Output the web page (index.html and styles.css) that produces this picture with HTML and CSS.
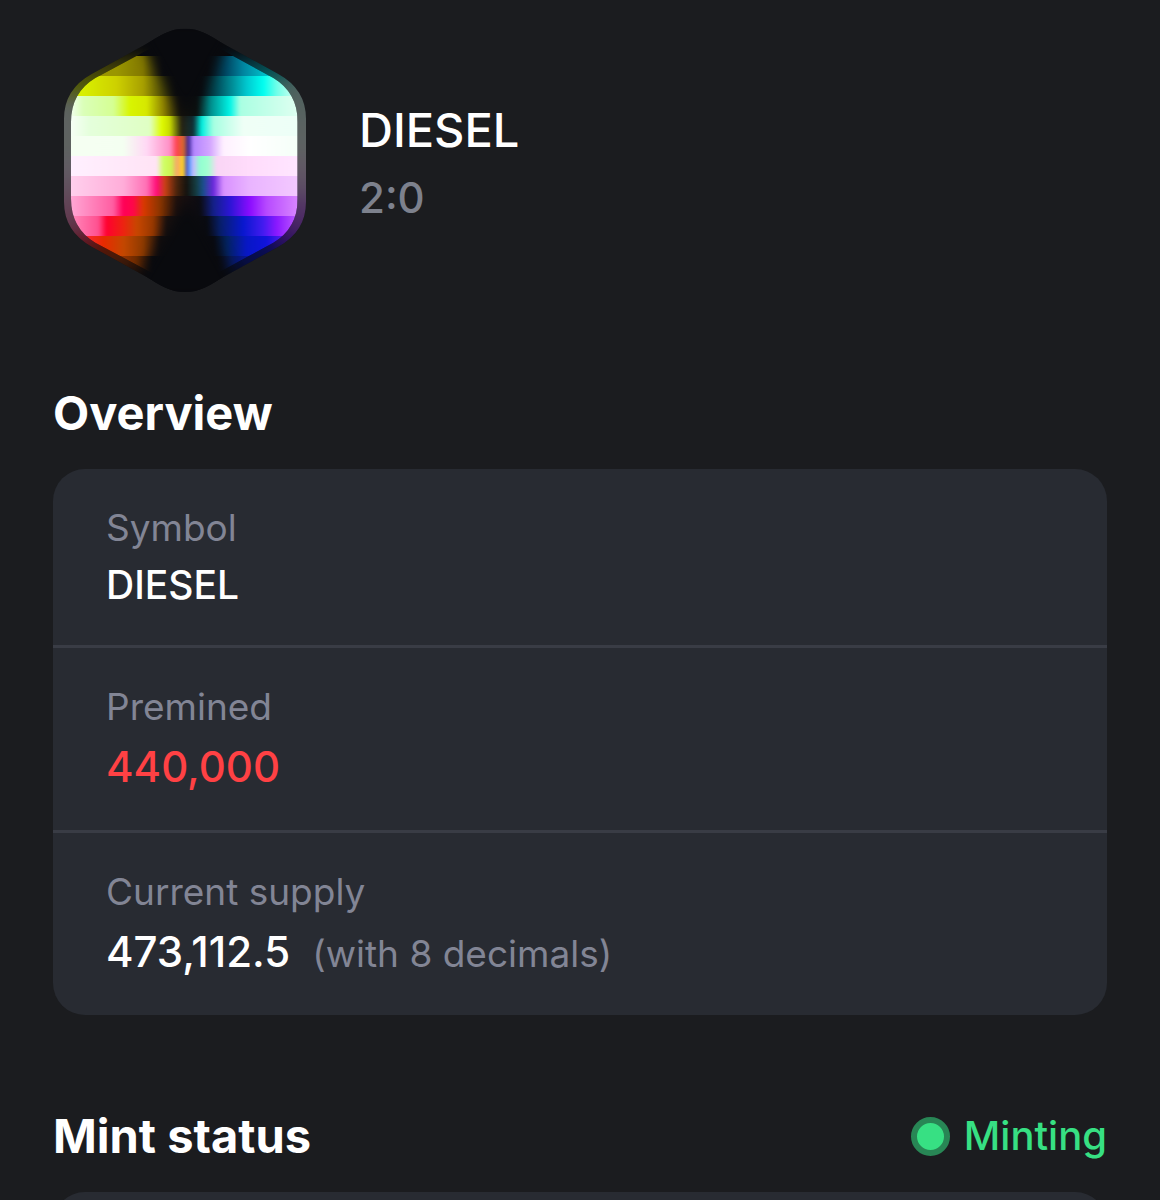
FILE: index.html
```html
<!DOCTYPE html>
<html lang="en">
<head>
<meta charset="utf-8">
<meta name="viewport" content="width=device-width, initial-scale=1">
<title>DIESEL</title>
<link rel="stylesheet" href="styles.css">
</head>
<body>
<main class="page">
  <header class="token">
    <svg class="token-logo" viewBox="42 24 726 792" role="img" aria-label="DIESEL logo">
      <defs>
        <clipPath id="outer"><path d="M285 74C335 44 360 26 405 26S475 44 525 74L685 162Q768 208 768 296V546Q768 634 685 680L525 768C475 798 450 816 405 816S335 798 285 768L125 680Q42 634 42 546V296Q42 208 125 162Z"/></clipPath>
        <clipPath id="inner"><path d="M345 62Q405 28 465 62L670 174Q743 218 743 306V536Q743 624 670 668L465 780Q405 814 345 780L136 668Q63 624 63 536V306Q63 218 136 174Z"/></clipPath>
        <filter id="glow" x="-10%" y="-10%" width="120%" height="120%" color-interpolation-filters="sRGB"><feGaussianBlur stdDeviation="14 24"/></filter>
        <filter id="soft" x="-2%" y="-2%" width="104%" height="104%" color-interpolation-filters="sRGB"><feGaussianBlur stdDeviation="5 1"/></filter>
        <filter id="shade" x="-30%" y="-30%" width="160%" height="160%" color-interpolation-filters="sRGB"><feGaussianBlur stdDeviation="20"/></filter>
        <linearGradient id="b1" gradientUnits="userSpaceOnUse" x1="0" x2="1000"><stop offset=".2" stop-color="#9a9600"/><stop offset=".28" stop-color="#817700"/><stop offset=".34" stop-color="#0b0b0f"/><stop offset=".47" stop-color="#090a0e"/><stop offset=".53" stop-color="#004a66"/><stop offset=".58" stop-color="#0085a0"/><stop offset=".65" stop-color="#00c4cc"/></linearGradient>
        <linearGradient id="b2" gradientUnits="userSpaceOnUse" x1="0" x2="1000"><stop offset=".1" stop-color="#d8ef00"/><stop offset=".2" stop-color="#cdd000"/><stop offset=".28" stop-color="#a79f00"/><stop offset=".38" stop-color="#0e0e0b"/><stop offset=".45" stop-color="#080b0f"/><stop offset=".51" stop-color="#005b68"/><stop offset=".59" stop-color="#00c8cf"/><stop offset=".64" stop-color="#00fff0"/><stop offset=".68" stop-color="#6fffe8"/><stop offset=".73" stop-color="#c8fff0"/></linearGradient>
        <linearGradient id="b3" gradientUnits="userSpaceOnUse" x1="0" x2="1000"><stop offset=".06" stop-color="#f2fff0"/><stop offset=".1" stop-color="#daffb8"/><stop offset=".19" stop-color="#d5ff93"/><stop offset=".24" stop-color="#d8f500"/><stop offset=".29" stop-color="#d6e800"/><stop offset=".34" stop-color="#8f8300"/><stop offset=".39" stop-color="#17140b"/><stop offset=".44" stop-color="#0b1110"/><stop offset=".48" stop-color="#008a89"/><stop offset=".54" stop-color="#00f4e6"/><stop offset=".57" stop-color="#a9ffe2"/><stop offset=".74" stop-color="#ddfff0"/></linearGradient>
        <linearGradient id="b4" gradientUnits="userSpaceOnUse" x1="0" x2="1000"><stop offset=".06" stop-color="#f7fff7"/><stop offset=".12" stop-color="#e4ffdb"/><stop offset=".3" stop-color="#dfffc3"/><stop offset=".335" stop-color="#dffb00"/><stop offset=".36" stop-color="#c7d900"/><stop offset=".395" stop-color="#272313"/><stop offset=".43" stop-color="#0f3038"/><stop offset=".455" stop-color="#00eee0"/><stop offset=".49" stop-color="#a5ffe1"/><stop offset=".58" stop-color="#effff6"/><stop offset=".74" stop-color="#edfff7"/></linearGradient>
        <linearGradient id="b5" gradientUnits="userSpaceOnUse" x1="0" x2="1000"><stop offset=".06" stop-color="#f5fff2"/><stop offset=".22" stop-color="#f4fff1"/><stop offset=".29" stop-color="#ffd8f5"/><stop offset=".36" stop-color="#ff8fc6"/><stop offset=".38" stop-color="#ff4350"/><stop offset=".4" stop-color="#d96a27"/><stop offset=".415" stop-color="#3b2599"/><stop offset=".43" stop-color="#b385ff"/><stop offset=".48" stop-color="#d3a5ff"/><stop offset=".52" stop-color="#fff0ff"/><stop offset=".6" stop-color="#fff"/><stop offset=".74" stop-color="#f5fff8"/></linearGradient>
        <linearGradient id="b6" gradientUnits="userSpaceOnUse" x1="0" x2="1000"><stop offset=".06" stop-color="#fff0ff"/><stop offset=".32" stop-color="#ffe3f5"/><stop offset=".34" stop-color="#cfff67"/><stop offset=".365" stop-color="#cdf34f"/><stop offset=".38" stop-color="#f5a76c"/><stop offset=".4" stop-color="#ffd21c"/><stop offset=".41" stop-color="#4a51c9"/><stop offset=".42" stop-color="#63a8ff"/><stop offset=".43" stop-color="#c9b8ff"/><stop offset=".45" stop-color="#91ffd0"/><stop offset=".475" stop-color="#a5ffd2"/><stop offset=".5" stop-color="#f9d5f5"/><stop offset=".6" stop-color="#ffdcfb"/><stop offset=".74" stop-color="#ffe5ff"/></linearGradient>
        <linearGradient id="b7" gradientUnits="userSpaceOnUse" x1="0" x2="1000"><stop offset=".06" stop-color="#ffd0ed"/><stop offset=".22" stop-color="#ffadd9"/><stop offset=".29" stop-color="#ff70b5"/><stop offset=".32" stop-color="#ff0d78"/><stop offset=".345" stop-color="#c94113"/><stop offset=".38" stop-color="#4c250d"/><stop offset=".41" stop-color="#15130f"/><stop offset=".44" stop-color="#154046"/><stop offset=".46" stop-color="#1a4f8d"/><stop offset=".49" stop-color="#6a27dc"/><stop offset=".52" stop-color="#d890ff"/><stop offset=".6" stop-color="#e9b4ff"/><stop offset=".74" stop-color="#f3c8ff"/></linearGradient>
        <linearGradient id="b8" gradientUnits="userSpaceOnUse" x1="0" x2="1000"><stop offset=".06" stop-color="#ffa8d6"/><stop offset=".19" stop-color="#ff5da1"/><stop offset=".22" stop-color="#ff0057"/><stop offset=".25" stop-color="#ff0749"/><stop offset=".28" stop-color="#d93900"/><stop offset=".33" stop-color="#8a3500"/><stop offset=".38" stop-color="#20110d"/><stop offset=".45" stop-color="#0c0c14"/><stop offset=".49" stop-color="#132087"/><stop offset=".54" stop-color="#2b15d5"/><stop offset=".6" stop-color="#8b0cff"/><stop offset=".65" stop-color="#b74aff"/><stop offset=".74" stop-color="#d783ff"/></linearGradient>
        <linearGradient id="b9" gradientUnits="userSpaceOnUse" x1="0" x2="1000"><stop offset=".06" stop-color="#ff8abe"/><stop offset=".145" stop-color="#ff5090"/><stop offset=".17" stop-color="#ff0030"/><stop offset=".22" stop-color="#ed2310"/><stop offset=".26" stop-color="#c84600"/><stop offset=".31" stop-color="#963800"/><stop offset=".35" stop-color="#1b110e"/><stop offset=".47" stop-color="#090b12"/><stop offset=".51" stop-color="#081f69"/><stop offset=".58" stop-color="#0817cf"/><stop offset=".64" stop-color="#431bf0"/><stop offset=".68" stop-color="#8a18ff"/><stop offset=".74" stop-color="#bd57ff"/></linearGradient>
        <linearGradient id="b10" gradientUnits="userSpaceOnUse" x1="0" x2="1000"><stop offset=".1" stop-color="#ff263c"/><stop offset=".16" stop-color="#e82a00"/><stop offset=".22" stop-color="#c44700"/><stop offset=".28" stop-color="#8d3a00"/><stop offset=".33" stop-color="#150e0d"/><stop offset=".49" stop-color="#080a11"/><stop offset=".53" stop-color="#04235f"/><stop offset=".59" stop-color="#0717c5"/><stop offset=".65" stop-color="#1013dc"/><stop offset=".71" stop-color="#671cf2"/></linearGradient>
        <linearGradient id="b11" gradientUnits="userSpaceOnUse" x1="0" x2="1000"><stop offset=".2" stop-color="#a33400"/><stop offset=".26" stop-color="#6c2b00"/><stop offset=".31" stop-color="#090a0e"/><stop offset=".5" stop-color="#090a0e"/><stop offset=".54" stop-color="#071a59"/><stop offset=".6" stop-color="#0713a5"/></linearGradient>
        <g id="bands">
          <rect x="0" y="108" width="810" height="60" fill="url(#b1)"/>
          <rect x="0" y="168" width="810" height="60" fill="url(#b2)"/>
          <rect x="0" y="228" width="810" height="60" fill="url(#b3)"/>
          <rect x="0" y="288" width="810" height="60" fill="url(#b4)"/>
          <rect x="0" y="348" width="810" height="60" fill="url(#b5)"/>
          <rect x="0" y="408" width="810" height="60" fill="url(#b6)"/>
          <rect x="0" y="468" width="810" height="60" fill="url(#b7)"/>
          <rect x="0" y="528" width="810" height="60" fill="url(#b8)"/>
          <rect x="0" y="588" width="810" height="60" fill="url(#b9)"/>
          <rect x="0" y="648" width="810" height="60" fill="url(#b10)"/>
          <rect x="0" y="708" width="810" height="60" fill="url(#b11)"/>
        </g>
      </defs>
      <g clip-path="url(#outer)">
        <rect width="810" height="840" fill="#090a0e"/>
        <g opacity=".36" filter="url(#glow)"><use href="#bands"/></g>
        <g clip-path="url(#inner)">
          <rect width="810" height="840" fill="#090a0e"/>
          <g filter="url(#soft)"><use href="#bands"/></g>
        </g>
        <g fill="#090a0e" filter="url(#shade)">
          <path d="M240 0H570L500 120 410 300 310 120Z"/>
          <path d="M230 840H580L500 690 412 530 320 690Z"/>
        </g>
      </g>
    </svg>
    <div class="token-text">
      <h1 class="token-name">DIESEL</h1>
      <p class="token-id">2:0</p>
    </div>
  </header>

  <section class="section">
    <div class="section-head"><h2 class="section-title">Overview</h2></div>
    <dl class="card">
      <div class="row">
        <dt class="label">Symbol</dt>
        <dd class="value value-symbol">DIESEL</dd>
      </div>
      <div class="row">
        <dt class="label">Premined</dt>
        <dd class="value value-alert">440,000</dd>
      </div>
      <div class="row">
        <dt class="label">Current supply</dt>
        <dd class="value value-supply">473,112.5 <span class="note">(with 8 decimals)</span></dd>
      </div>
    </dl>
  </section>

  <section class="section">
    <div class="section-head">
      <h2 class="section-title">Mint status</h2>
      <p class="status"><span class="status-dot"></span>Minting</p>
    </div>
    <div class="card card-next"></div>
  </section>
</main>
</body>
</html>
```
FILE: styles.css
```css
* {
  box-sizing: border-box;
}

body {
  margin: 0;
  height: 100vh;
  overflow: hidden;
  background: #1b1c1f;
  color: #fff;
  font-family: Inter, "Liberation Sans", sans-serif;
}

h1, h2, p, dl, dd {
  margin: 0;
}

.page {
  padding: 28px 53px 0;
}

.token {
  display: flex;
  align-items: center;
  gap: 53px;
  padding-left: 11px;
}

.token-logo {
  width: 242px;
  height: 264px;
  flex: none;
}

.token-text {
  padding-top: 4px;
}

.token-name {
  font-size: 47px;
  line-height: 72px;
  font-weight: 500;
}

.token-id {
  font-size: 42px;
  line-height: 64px;
  font-weight: 500;
  color: #7d818d;
}

.section {
  margin-top: 89px;
}

.section-head {
  display: flex;
  align-items: center;
  justify-content: space-between;
  line-height: 64px;
}

.section-title {
  font-size: 47px;
  font-weight: 700;
}

.card {
  margin-top: 24px;
  border-radius: 32px;
  background: #282b32;
}

.card-next {
  height: 160px;
}

.row {
  padding: 35px 53px 36px;
}

.row + .row {
  border-top: 3px solid #393c45;
}

.label {
  margin-bottom: 9px;
  font-size: 37px;
  line-height: 48px;
  color: #828595;
}

.value {
  font-size: 42px;
  line-height: 54px;
  font-weight: 500;
}

.value-symbol {
  font-size: 39px;
  line-height: 48px;
}

.value-alert {
  color: #ff4144;
}

.value-supply {
  display: flex;
  align-items: baseline;
  gap: 22px;
}

.note {
  font-size: 37px;
  line-height: 48px;
  font-weight: 400;
  color: #828595;
}

.status {
  display: flex;
  align-items: center;
  gap: 14px;
  font-size: 40px;
  font-weight: 500;
  color: #37e083;
}

.status-dot {
  width: 39px;
  height: 39px;
  border: 6px solid #288655;
  border-radius: 50%;
  background: #37e083;
}
```
